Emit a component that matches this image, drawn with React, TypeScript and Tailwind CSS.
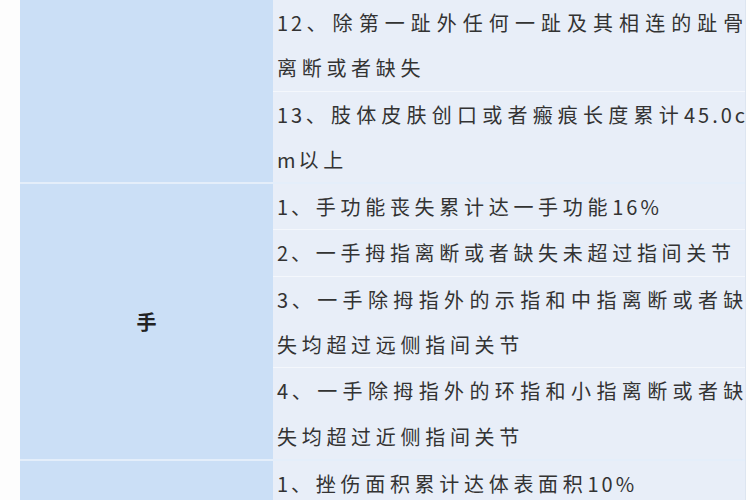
import React from "react";

const font = { fontFamily: '"Noto Sans CJK SC", "Noto Sans", sans-serif' };

type Group = { label: string; rows: string[][] };

const groups: Group[] = [
  {
    label: "",
    rows: [
      ["12、除第一趾外任何一趾及其相连的趾骨", "离断或者缺失"],
      ["13、肢体皮肤创口或者瘢痕长度累计45.0c", "m以上"],
    ],
  },
  {
    label: "手",
    rows: [
      ["1、手功能丧失累计达一手功能16%"],
      ["2、一手拇指离断或者缺失未超过指间关节"],
      ["3、一手除拇指外的示指和中指离断或者缺", "失均超过远侧指间关节"],
      ["4、一手除拇指外的环指和小指离断或者缺", "失均超过近侧指间关节"],
    ],
  },
  {
    label: "",
    rows: [["1、挫伤面积累计达体表面积10%"]],
  },
];

function renderLine(line: string) {
  const parts = line.split(/([\x00-\x7f%]+)/).filter((p) => p.length > 0);
  return parts.map((p, i) =>
    /^[\x00-\x7f%]+$/.test(p) ? (
      <span key={i} className="tracking-[3px]">
        {p}
      </span>
    ) : (
      <span key={i}>{p}</span>
    )
  );
}

export default function App() {
  return (
    <div className="w-[750px] h-[500px] overflow-hidden bg-[#fdfdfd] pl-[20px]" style={font}>
      <div className="w-[726px] border-r border-[#dde5f0]">
        {groups.map((g, gi) => (
          <div key={gi} className="flex border-b-2 border-[#e4eefa]">
            <div className="w-[253px] shrink-0 bg-[#cbdff6] flex items-center justify-center text-[20px] font-bold text-[#222]">
              {g.label}
            </div>
            <div className="flex-1 flex flex-col bg-[#e8eef8]">
              {g.rows.map((r, ri) => (
                <div
                  key={ri}
                  className={
                    "pl-[4px] text-[20px] leading-[45.3px] tracking-[4.7px] text-[#333] whitespace-nowrap " +
                    (ri < g.rows.length - 1 ? "border-b border-[#f4f7fc]" : "")
                  }
                >
                  {r.map((line, li) =>
                    li < r.length - 1 ? (
                      <div key={li} className="text-justify [text-align-last:justify] mr-[-3px]">
                        {renderLine(line)}
                      </div>
                    ) : (
                      <div key={li}>{renderLine(line)}</div>
                    )
                  )}
                </div>
              ))}
            </div>
          </div>
        ))}
      </div>
    </div>
  );
}
